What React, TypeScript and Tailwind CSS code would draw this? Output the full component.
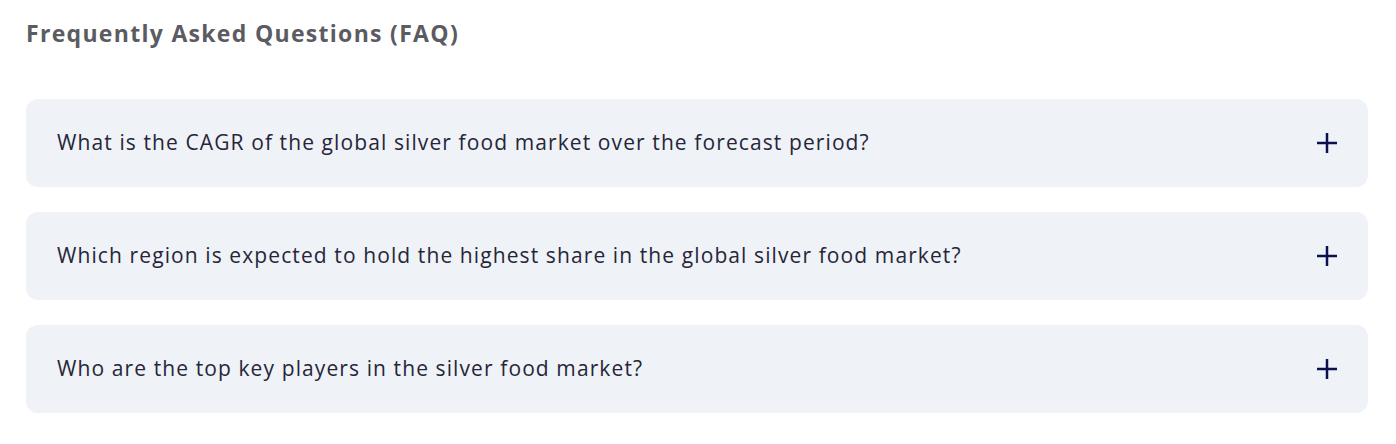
import React, { useState } from 'react';

const questions = [
  'What is the CAGR of the global silver food market over the forecast period?',
  'Which region is expected to hold the highest share in the global silver food market?',
  'Who are the top key players in the silver food market?',
];

const PlusIcon: React.FC = () => (
  <svg width="22" height="22" viewBox="0 0 22 22" className="shrink-0">
    <path d="M11 1v20M1 11h20" stroke="#0b1150" strokeWidth="2.5" />
  </svg>
);

export default function App() {
  const [open, setOpen] = useState<number | null>(null);

  return (
    <div className="bg-white min-h-screen px-[26px] pt-[18px] pb-8 font-['Open_Sans',sans-serif]">
      <h2 className="text-[23px] font-bold text-[#5b5b62] tracking-[1.3px] leading-[30px] font-['Open_Sans',sans-serif]">
        Frequently Asked Questions (FAQ)
      </h2>

      <div className="mt-[51px] flex flex-col gap-[25px] w-[1342px]">
        {questions.map((q, i) => (
          <button
            key={q}
            onClick={() => setOpen(open === i ? null : i)}
            className="h-[88px] w-full flex items-center justify-between bg-[#eff2f7] rounded-[12px] pl-[31px] pr-[30px] text-left"
          >
            <span className="text-[21px] text-[#262638] font-['Open_Sans',sans-serif] tracking-[1.1px] leading-[28px] -mt-[3px]">{q}</span>
            <PlusIcon />
          </button>
        ))}
      </div>
    </div>
  );
}
